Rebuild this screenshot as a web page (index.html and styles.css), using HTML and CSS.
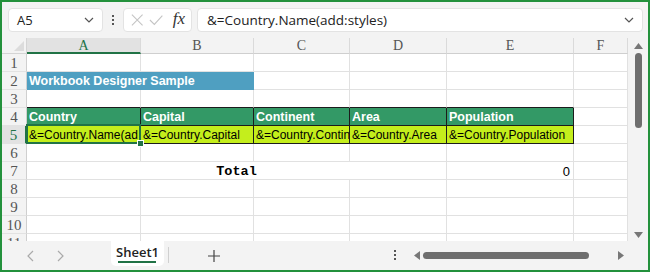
FILE: index.html
```html
<!DOCTYPE html>
<html lang="en">
<head>
  <meta charset="UTF-8">
  <title>Workbook Designer Sample</title>
  <link rel="stylesheet" href="styles.css">
</head>
<body>
  <div class="window">
    <div class="toolbar">
      <div class="namebox">
        <span>A5</span>
        <svg class="chev" width="10" height="6" viewBox="0 0 10 6"><path d="M1 1 L5 5 L9 1" fill="none" stroke="#555" stroke-width="1.2"/></svg>
      </div>
      <div class="vdots"><i></i><i></i><i></i></div>
      <div class="fxbox">
        <svg width="14" height="14" viewBox="0 0 14 14"><path d="M1 1 L13 13 M13 1 L1 13" stroke="#c4c4c4" stroke-width="1.2"/></svg>
        <svg width="16" height="14" viewBox="0 0 16 14"><path d="M1 7 L6 12 L15 2" fill="none" stroke="#c4c4c4" stroke-width="1.2"/></svg>
        <span class="fx">fx</span>
      </div>
      <div class="formula">
        <span>&amp;=Country.Name(add:styles)</span>
        <svg class="chev" width="10" height="6" viewBox="0 0 10 6"><path d="M1 1 L5 5 L9 1" fill="none" stroke="#555" stroke-width="1.2"/></svg>
      </div>
    </div>

    <div class="sheet">
      <div class="grid">
        <div class="corner"></div>
        <div class="colhead sel">A</div>
        <div class="colhead">B</div>
        <div class="colhead">C</div>
        <div class="colhead">D</div>
        <div class="colhead">E</div>
        <div class="colhead">F</div>

        <div class="rowhead">1</div>
        <div class="cell"></div><div class="cell"></div><div class="cell"></div><div class="cell"></div><div class="cell"></div><div class="cell"></div>

        <div class="rowhead">2</div>
        <div class="cell title">Workbook Designer Sample</div>
        <div class="cell"></div><div class="cell"></div><div class="cell"></div><div class="cell"></div>

        <div class="rowhead">3</div>
        <div class="cell above"></div><div class="cell above"></div><div class="cell above"></div><div class="cell above"></div><div class="cell above"></div><div class="cell"></div>

        <div class="rowhead">4</div>
        <div class="cell hdr">Country</div>
        <div class="cell hdr">Capital</div>
        <div class="cell hdr">Continent</div>
        <div class="cell hdr">Area</div>
        <div class="cell hdr">Population</div>
        <div class="cell"></div>

        <div class="rowhead sel">5</div>
        <div class="cell data active"><span class="clip">&amp;=Country.Name(add:styles)</span></div>
        <div class="cell data">&amp;=Country.Capital</div>
        <div class="cell data">&amp;=Country.Continent</div>
        <div class="cell data">&amp;=Country.Area</div>
        <div class="cell data">&amp;=Country.Population</div>
        <div class="cell"></div>

        <div class="rowhead">6</div>
        <div class="cell"></div><div class="cell"></div><div class="cell"></div><div class="cell"></div><div class="cell"></div><div class="cell"></div>

        <div class="rowhead">7</div>
        <div class="cell total">Total</div>
        <div class="cell num">0</div>
        <div class="cell"></div>

        <div class="rowhead">8</div>
        <div class="cell"></div><div class="cell"></div><div class="cell"></div><div class="cell"></div><div class="cell"></div><div class="cell"></div>

        <div class="rowhead">9</div>
        <div class="cell"></div><div class="cell"></div><div class="cell"></div><div class="cell"></div><div class="cell"></div><div class="cell"></div>

        <div class="rowhead">10</div>
        <div class="cell"></div><div class="cell"></div><div class="cell"></div><div class="cell"></div><div class="cell"></div><div class="cell"></div>

        <div class="rowhead">11</div>
        <div class="cell"></div><div class="cell"></div><div class="cell"></div><div class="cell"></div><div class="cell"></div><div class="cell"></div>
      </div>

      <div class="vscroll">
        <svg width="9" height="6" viewBox="0 0 9 6"><path d="M0 6 L4.5 0 L9 6 Z" fill="#777"/></svg>
        <div class="vthumb"></div>
        <svg class="down" width="9" height="6" viewBox="0 0 9 6"><path d="M0 0 L4.5 6 L9 0 Z" fill="#777"/></svg>
      </div>
    </div>

    <div class="tabbar">
      <div class="nav">
        <svg width="7" height="12" viewBox="0 0 7 12"><path d="M6 1 L1 6 L6 11" fill="none" stroke="#aaa" stroke-width="1.2"/></svg>
        <svg width="7" height="12" viewBox="0 0 7 12"><path d="M1 1 L6 6 L1 11" fill="none" stroke="#aaa" stroke-width="1.2"/></svg>
      </div>
      <div class="tab">Sheet1</div>
      <div class="sep"></div>
      <div class="add">
        <svg width="12" height="12" viewBox="0 0 12 12"><path d="M6 0 V12 M0 6 H12" stroke="#444" stroke-width="1.2"/></svg>
      </div>
      <div class="hdots"><i></i><i></i><i></i></div>
      <div class="hscroll">
        <svg width="6" height="9" viewBox="0 0 6 9"><path d="M6 0 L0 4.5 L6 9 Z" fill="#777"/></svg>
        <div class="hthumb"></div>
        <svg class="right" width="6" height="9" viewBox="0 0 6 9"><path d="M0 0 L6 4.5 L0 9 Z" fill="#777"/></svg>
      </div>
    </div>
  </div>
</body>
</html>
```

FILE: styles.css
```css
html, body {
  margin: 0;
  padding: 0;
}
body {
  width: 650px;
  height: 272px;
  overflow: hidden;
  font-family: "Liberation Sans", Arial, sans-serif;
}
.window {
  width: 650px;
  height: 272px;
  box-sizing: border-box;
  border: 2px solid #23913c;
  background: #f3f3f3;
  display: flex;
  flex-direction: column;
}

/* formula bar */
.toolbar {
  height: 36px;
  display: flex;
  align-items: center;
  padding: 0 5px 0 6px;
  flex: none;
}
.namebox, .fxbox, .formula {
  height: 24px;
  box-sizing: border-box;
  background: #fff;
  border: 1px solid #e3e3e3;
  border-radius: 4px;
  display: flex;
  align-items: center;
}
.namebox {
  width: 95px;
  padding: 0 8px 0 8px;
  justify-content: space-between;
  font-family: "Open Sans", "Noto Sans", sans-serif;
  font-size: 13px;
  color: #222;
}
.vdots, .hdots {
  display: flex;
  flex-direction: column;
  gap: 2px;
  align-items: center;
}
.vdots {
  width: 20px;
}
.vdots i, .hdots i {
  display: block;
  width: 2px;
  height: 2px;
  background: #555;
}
.fxbox {
  width: 69px;
  padding: 0 6px 0 7px;
  gap: 6px;
}
.fx {
  font-family: "Liberation Serif", serif;
  font-style: italic;
  font-size: 17px;
  color: #333;
  margin-left: 3px;
  margin-top: -2px;
}
.formula {
  flex: 1;
  margin-left: 5px;
  padding: 0 8px 0 9px;
  justify-content: space-between;
  font-family: "Open Sans", "Noto Sans", sans-serif;
  font-size: 13.5px;
  color: #222;
}

/* sheet */
.sheet {
  height: 203px;
  display: flex;
  background: #f3f3f3;
  flex: none;
}
.grid {
  width: 626px;
  height: 203px;
  overflow: hidden;
  display: grid;
  grid-template-columns: 25px 114px 113px 96px 97px 127px 54px;
  grid-template-rows: 16px repeat(11, 18px);
  background: #fff;
  flex: none;
}
.corner {
  background: #f3f3f3;
  border-right: 1px solid #d4d4d4;
  border-bottom: 1px solid #d4d4d4;
  position: relative;
}
.corner::after {
  content: "";
  position: absolute;
  right: 2px;
  bottom: 2px;
  border-left: 10px solid transparent;
  border-bottom: 10px solid #dcdcdc;
}
.colhead, .rowhead {
  background: #f3f3f3;
  color: #555;
  font-family: "Liberation Serif", serif;
  box-sizing: border-box;
}
.colhead {
  font-size: 14px;
  line-height: 15px;
  text-align: center;
  border-right: 1px solid #dadada;
  border-bottom: 1px solid #cfcfcf;
}
.colhead.sel {
  background: #e2e2e2;
  color: #217346;
  border-bottom: 2px solid #217346;
}
.rowhead {
  font-size: 15px;
  line-height: 18px;
  text-align: center;
  border-right: 1px solid #cfcfcf;
  border-bottom: 1px solid #e2e2e2;
}
.rowhead.sel {
  background: #e2e2e2;
  color: #217346;
  border-right: 2px solid #217346;
}
.cell {
  box-sizing: border-box;
  border-right: 1px solid #e1e1e1;
  border-bottom: 1px solid #e1e1e1;
  font-size: 12px;
  line-height: 17px;
  padding: 1px 2px 0;
  white-space: nowrap;
  overflow: hidden;
  color: #000;
}
.cell.above {
  border-bottom-color: #1c1c1c;
}
.cell.title {
  grid-column: span 2;
  background: #4f9fc1;
  border-color: #4f9fc1;
  color: #fff;
  font-weight: bold;
  font-size: 12.5px;
}
.cell.hdr {
  background: #339966;
  border-color: #1c1c1c;
  color: #fff;
  font-weight: bold;
  font-size: 12.5px;
}
.cell.data {
  background: #c4ee1c;
  border-color: #1c1c1c;
}
.cell.active {
  position: relative;
  overflow: visible;
  z-index: 1;
}
.clip {
  display: block;
  overflow: hidden;
}
.cell.active::before {
  content: "";
  position: absolute;
  left: -1px;
  top: -2px;
  right: -1px;
  bottom: -1px;
  border: 2px solid #217346;
}
.cell.active::after {
  content: "";
  position: absolute;
  right: -4px;
  bottom: -4px;
  width: 5px;
  height: 5px;
  background: #217346;
  border: 1px solid #fff;
}
.cell.total {
  grid-column: span 4;
  text-align: center;
  font-family: "Liberation Mono", "Courier New", monospace;
  font-weight: bold;
  font-size: 13.5px;
}
.cell.num {
  text-align: right;
  font-size: 13px;
  padding-right: 3px;
}

/* vertical scrollbar */
.vscroll {
  flex: 1;
  display: flex;
  flex-direction: column;
  align-items: center;
  padding-top: 5px;
}
.vthumb {
  width: 7px;
  height: 75px;
  margin-top: 4px;
  border-radius: 4px;
  background: #6e6e6e;
}
.vscroll .down {
  margin-top: auto;
  margin-bottom: 3px;
}

/* sheet tabs */
.tabbar {
  flex: 1;
  display: flex;
  align-items: flex-start;
}
.nav {
  display: flex;
  gap: 23px;
  margin: 9px 0 0 25px;
}
.tab {
  margin-left: 47px;
  width: 53px;
  height: 25px;
  box-sizing: border-box;
  background: #fff;
  border-radius: 0 0 5px 5px;
  font-family: "Open Sans", "Noto Sans", sans-serif;
  font-size: 13px;
  font-weight: 600;
  color: #222;
  text-align: center;
  line-height: 22px;
  position: relative;
}
.tab::after {
  content: "";
  position: absolute;
  left: 7px;
  right: 8px;
  bottom: 3px;
  height: 2px;
  background: #217346;
}
.sep {
  width: 1px;
  height: 16px;
  background: #d0d0d0;
  margin: 6px 0 0 4px;
}
.add {
  margin: 7px 0 0 39px;
}
.hdots {
  margin: 9px 0 0 174px;
}
.hscroll {
  margin: 10px 0 0 18px;
  display: flex;
  align-items: center;
}
.hthumb {
  width: 166px;
  height: 7px;
  border-radius: 4px;
  background: #6e6e6e;
  margin-left: 3px;
}
.hscroll .right {
  margin-left: 29px;
}
```
